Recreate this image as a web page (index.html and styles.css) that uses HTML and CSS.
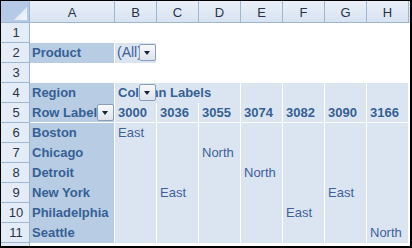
FILE: index.html
```html
<!DOCTYPE html>
<html>
<head>
<meta charset="utf-8">
<link rel="stylesheet" href="styles.css">
</head>
<body>
<div class="sheet">
  <div class="corner"><svg class="tri" width="28" height="21" viewBox="0 0 28 21"><defs><linearGradient id="g" x1="0" y1="0" x2="1" y2="1"><stop offset="0" stop-color="#d4e1f2"/><stop offset="1" stop-color="#f4f7fc"/></linearGradient></defs><polygon points="13,19 26,19 26,6" fill="url(#g)"/></svg></div>
  <div class="ch">A</div><div class="ch">B</div><div class="ch">C</div><div class="ch">D</div><div class="ch">E</div><div class="ch">F</div><div class="ch">G</div><div class="ch">H</div><div class="ch slice"></div>

  <div class="rh">1</div><div></div><div></div><div></div><div></div><div></div><div></div><div></div><div></div><div></div>

  <div class="rh">2</div>
  <div class="c lab">Product</div>
  <div class="c pv all">(All)<span class="dd"></span></div>
  <div></div><div></div><div></div><div></div><div></div><div></div><div></div>

  <div class="rh">3</div><div></div><div></div><div></div><div></div><div></div><div></div><div></div><div></div><div></div>

  <div class="rh">4</div>
  <div class="c lab">Region</div>
  <div class="c pv b span3">Column Labels<span class="dd dd-b4"></span></div>
  <div class="c pv"></div><div class="c pv"></div><div class="c pv"></div><div class="c pv"></div>
  <div></div>

  <div class="rh">5</div>
  <div class="c lab hb">Row Labels<span class="dd"></span></div>
  <div class="c pv b hb">3000</div><div class="c pv b hb">3036</div><div class="c pv b hb">3055</div><div class="c pv b hb">3074</div><div class="c pv b hb">3082</div><div class="c pv b hb">3090</div><div class="c pv b hb">3166</div>
  <div></div>

  <div class="rh">6</div>
  <div class="c lab">Boston</div>
  <div class="c pv">East</div><div class="c pv"></div><div class="c pv"></div><div class="c pv"></div><div class="c pv"></div><div class="c pv"></div><div class="c pv"></div>
  <div></div>

  <div class="rh">7</div>
  <div class="c lab">Chicago</div>
  <div class="c pv"></div><div class="c pv"></div><div class="c pv">North</div><div class="c pv"></div><div class="c pv"></div><div class="c pv"></div><div class="c pv"></div>
  <div></div>

  <div class="rh">8</div>
  <div class="c lab">Detroit</div>
  <div class="c pv"></div><div class="c pv"></div><div class="c pv"></div><div class="c pv">North</div><div class="c pv"></div><div class="c pv"></div><div class="c pv"></div>
  <div></div>

  <div class="rh">9</div>
  <div class="c lab">New York</div>
  <div class="c pv"></div><div class="c pv">East</div><div class="c pv"></div><div class="c pv"></div><div class="c pv"></div><div class="c pv">East</div><div class="c pv"></div>
  <div></div>

  <div class="rh">10</div>
  <div class="c lab">Philadelphia</div>
  <div class="c pv"></div><div class="c pv"></div><div class="c pv"></div><div class="c pv"></div><div class="c pv">East</div><div class="c pv"></div><div class="c pv"></div>
  <div></div>

  <div class="rh">11</div>
  <div class="c lab">Seattle</div>
  <div class="c pv"></div><div class="c pv"></div><div class="c pv"></div><div class="c pv"></div><div class="c pv"></div><div class="c pv"></div><div class="c pv">North</div>
  <div></div>

  <div class="rh slice"></div>
</div>
</body>
</html>
```
FILE: styles.css
```css
* { box-sizing: border-box; margin: 0; padding: 0; }
html, body { margin: 0; background: #000; }
body {
  font-family: "Liberation Sans", Arial, sans-serif;
  font-size: 13px;
}
.sheet {
  display: grid;
  grid-template-columns: 29px 85px repeat(7, 42px) 1px;
  grid-template-rows: 22px repeat(11, 20px) 3px;
  width: 412px;
  height: 248px;
  border-style: solid;
  border-color: #000;
  border-width: 1px 2px 2px 1px;
  background: #fff;
  overflow: hidden;
}
.corner {
  background: #b5cae7;
  border-right: 1px solid #9eb6ce;
  border-bottom: 1px solid #9eb6ce;
  position: relative;
}
.tri { display: block; }
.ch {
  background: linear-gradient(#eaf0f9, #d7e2f1);
  border-right: 1px solid #9eb6ce;
  border-bottom: 1px solid #9eb6ce;
  text-align: center;
  color: #2a3346;
  padding-top: 4px;
  line-height: 16px;
}
.ch.slice { border-right: none; }
.rh {
  background: #e4ecf7;
  border-right: 1px solid #9eb6ce;
  border-bottom: 1px solid #9eb6ce;
  text-align: center;
  color: #2a3346;
  line-height: 19px;
  padding-left: 2px;
}
.rh.slice { border-bottom: none; }
.c {
  white-space: nowrap;
  line-height: 19px;
  padding-left: 3px;
  position: relative;
  overflow: visible;
}
.lab {
  background: #b8cce4;
  font-weight: bold;
  color: #365f94;
  padding-left: 2px;
  border-right: 1px solid #fff;
}
.pv {
  background: #dbe5f1;
  border-right: 1px solid #fff;
  color: #40609a;
}
.all { font-size: 14px; padding-left: 2px; }
.b { font-weight: bold; color: #365f94; }
.hb { border-bottom: 1px solid #fff; }
.span3 { grid-column: span 3; }
.dd {
  position: absolute;
  top: 1px;
  right: 0;
  width: 17px;
  height: 17px;
  border: 1px solid #8a9dba;
  border-radius: 2px;
  background: linear-gradient(#f8f9fb, #dde3ec);
}
.dd::after {
  content: "";
  position: absolute;
  left: 4px;
  top: 6px;
  border-left: 3.5px solid transparent;
  border-right: 3.5px solid transparent;
  border-top: 4px solid #16233b;
}
.dd-b4 { right: auto; left: 24px; }
```
